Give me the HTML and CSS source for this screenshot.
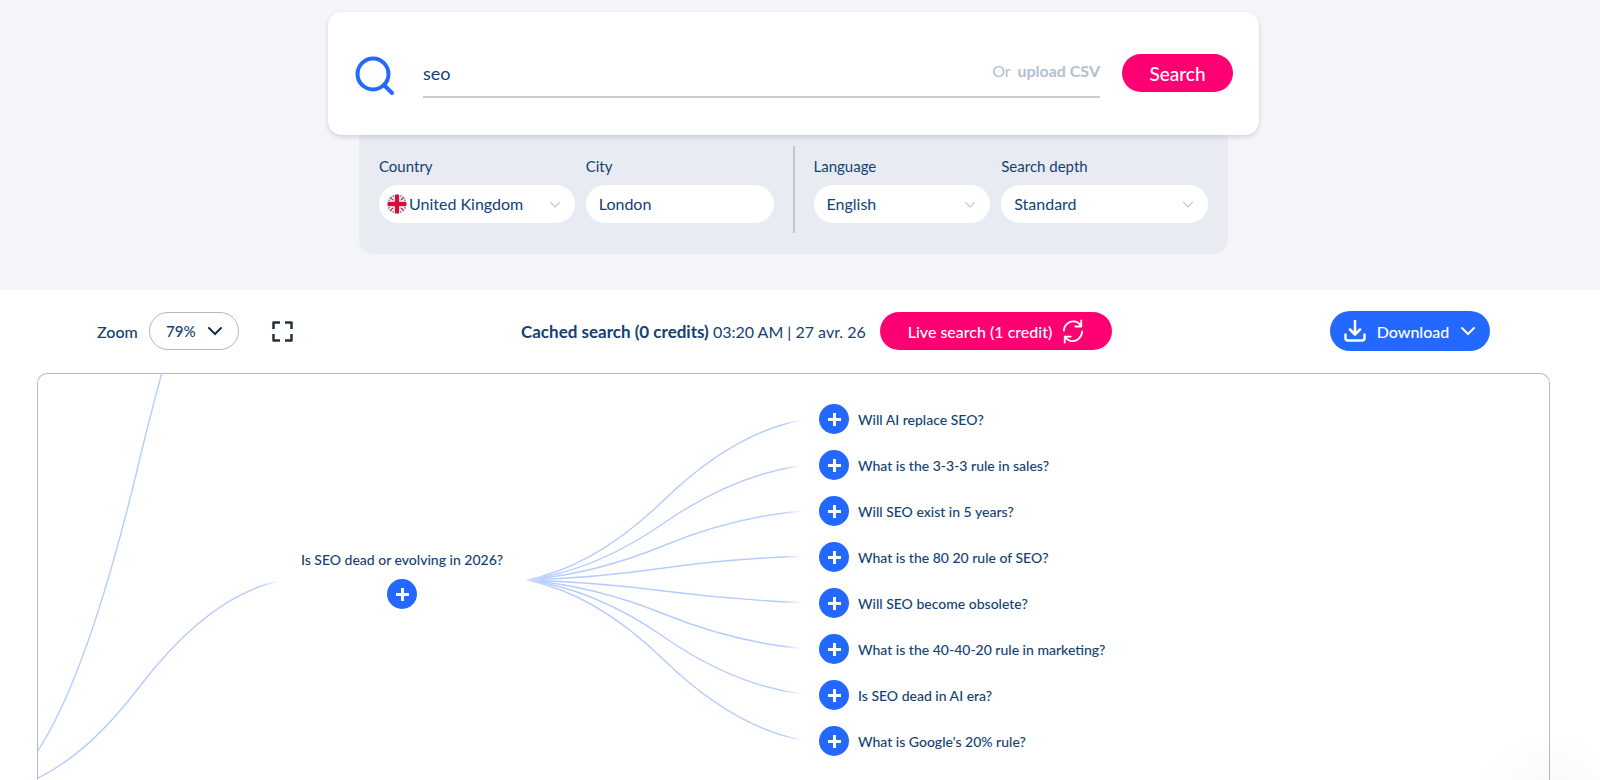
FILE: index.html
```html
<!DOCTYPE html>
<html lang="en">
<head>
<meta charset="utf-8">
<title>Search questions</title>
<link rel="stylesheet" href="styles.css">
</head>
<body>
<header class="hero">
  <form class="search-card">
    <svg class="search-icon" viewBox="0 0 40 40" aria-hidden="true"><circle cx="18" cy="18" r="15.5"/><path d="M29 29l8 8"/></svg>
    <div class="search-field">
      <input class="search-input" type="text" value="seo" aria-label="Keyword">
      <span class="upload">Or <a class="upload-link" href="#">upload CSV</a></span>
    </div>
    <button class="btn btn-search" type="submit">Search</button>
  </form>
  <div class="filters">
    <div class="field field-country">
      <label for="country">Country</label>
      <div class="control">
        <svg class="flag" viewBox="0 0 20 20" aria-hidden="true">
          <clipPath id="round"><circle cx="10" cy="10" r="9.5"/></clipPath>
          <g clip-path="url(#round)"><path fill="#0d3f78" d="M0 0h20v20H0z"/><path d="M0 0l20 20M20 0L0 20" stroke="#fff" stroke-width="4.6"/><path d="M0 0l20 20M20 0L0 20" stroke="#d0103a" stroke-width="1.3"/><path d="M10 0v20M0 10h20" stroke="#fff" stroke-width="7"/><path d="M10 0v20M0 10h20" stroke="#d0103a" stroke-width="4.4"/></g>
        </svg>
        <select class="pill pill-flag" id="country"><option>United Kingdom</option></select>
        <svg class="chevron" viewBox="0 0 10 6" aria-hidden="true"><path d="M1 1l4 4 4-4"/></svg>
      </div>
    </div>
    <div class="field field-city">
      <label for="city">City</label>
      <div class="control"><input class="pill" id="city" type="text" value="London"></div>
    </div>
    <div class="divider"></div>
    <div class="field field-language">
      <label for="language">Language</label>
      <div class="control">
        <select class="pill" id="language"><option>English</option></select>
        <svg class="chevron" viewBox="0 0 10 6" aria-hidden="true"><path d="M1 1l4 4 4-4"/></svg>
      </div>
    </div>
    <div class="field field-depth">
      <label for="depth">Search depth</label>
      <div class="control">
        <select class="pill" id="depth"><option>Standard</option></select>
        <svg class="chevron" viewBox="0 0 10 6" aria-hidden="true"><path d="M1 1l4 4 4-4"/></svg>
      </div>
    </div>
  </div>
</header>
<main class="results">
  <div class="toolbar">
    <div class="zoom">
      <label for="zoom">Zoom</label>
      <div class="control">
        <select class="zoom-select" id="zoom"><option>79%</option></select>
        <svg class="zoom-chevron" viewBox="0 0 14 9" aria-hidden="true"><path d="M1 1l6 6 6-6"/></svg>
      </div>
      <button class="fullscreen" type="button" aria-label="Full screen">
        <svg viewBox="0 0 21 21" aria-hidden="true"><path d="M1.5 8V1.5H8M13 1.5h6.5V8M19.500 13v6.500H13M8 19.500H1.500V13"/></svg>
      </button>
    </div>
    <div class="cached">
      <p><strong>Cached search (0 credits)</strong> 03:20 AM | 27 avr. 26</p>
      <button class="btn btn-live" type="button">Live search (1 credit)
        <svg viewBox="0 0 24 26" aria-hidden="true"><path d="M2 12C2.500 5 8 2 12.500 2c3.500 0 6.500 2 8 5M21 1v6.500h-6.500M22 13c-.5 7-6 10.500-10.500 10.500-3.500 0-6.500-2-8-5M3 25v-6.500h6.500"/></svg>
      </button>
    </div>
    <button class="btn btn-download" type="button">
      <svg class="tray" viewBox="0 0 22 22" aria-hidden="true"><path d="M11 1v13M6 9.500l5 5 5-5M1.500 14.500v3.500q0 2.500 2.500 2.500h14q2.500 0 2.500-2.500v-3.500"/></svg>
      Download
      <svg class="down" viewBox="0 0 16 10" aria-hidden="true"><path d="M2 2l6 6 6-6"/></svg>
    </button>
  </div>
  <section class="canvas">
    <svg class="links" viewBox="38 374 800 406" width="800" height="406" aria-hidden="true">
      <defs>
        <linearGradient id="fan" gradientUnits="userSpaceOnUse" x1="526" y1="0" x2="802" y2="0">
          <stop offset="0" stop-color="#b5ccff" stop-opacity="0"/><stop offset=".07" stop-color="#b5ccff"/><stop offset=".93" stop-color="#b5ccff"/><stop offset="1" stop-color="#b5ccff" stop-opacity="0"/>
        </linearGradient>
        <linearGradient id="root" gradientUnits="userSpaceOnUse" x1="3" y1="0" x2="279" y2="0">
          <stop offset=".93" stop-color="#b5ccff"/><stop offset="1" stop-color="#b5ccff" stop-opacity="0"/>
        </linearGradient>
      </defs>
      <g stroke="url(#root)">
        <path d="M3 788Q72 745 140 458Q209 171 277 128"/>
        <path d="M3 790Q72 776 140 686Q209 596 279 581"/>
      </g>
      <g stroke="url(#fan)">
        <path d="M526 580Q595 567 664 500Q733 433 802 420"/>
        <path d="M526 580Q595 571 664 523Q733 475 802 465.500"/>
        <path d="M526 580Q595 574 664 545.500Q733 517 802 511"/>
        <path d="M526 580Q595 578 664 568Q733 558 802 556.500"/>
        <path d="M526 580Q595 582 664 591Q733 600 802 602.500"/>
        <path d="M526 580Q595 586 664 614Q733 642 802 648.500"/>
        <path d="M526 580Q595 589 664 637Q733 685 802 694"/>
        <path d="M526 580Q595 593 664 660Q733 727 802 740"/>
      </g>
    </svg>
    <div class="parent">
      <span>Is SEO dead or evolving in 2026?</span>
      <button class="plus" type="button" aria-label="Expand"></button>
    </div>
    <ul class="children">
      <li><button class="plus" type="button" aria-label="Expand"></button>Will AI replace SEO?</li>
      <li><button class="plus" type="button" aria-label="Expand"></button>What is the 3-3-3 rule in sales?</li>
      <li><button class="plus" type="button" aria-label="Expand"></button>Will SEO exist in 5 years?</li>
      <li><button class="plus" type="button" aria-label="Expand"></button>What is the 80 20 rule of SEO?</li>
      <li><button class="plus" type="button" aria-label="Expand"></button>Will SEO become obsolete?</li>
      <li><button class="plus" type="button" aria-label="Expand"></button>What is the 40-40-20 rule in marketing?</li>
      <li><button class="plus" type="button" aria-label="Expand"></button>Is SEO dead in AI era?</li>
      <li><button class="plus" type="button" aria-label="Expand"></button>What is Google's 20% rule?</li>
    </ul>
  </section>
</main>
</body>
</html>
```
FILE: styles.css
```css
* { box-sizing: border-box; }

body {
  margin: 0;
  height: 100vh;
  display: flex;
  flex-direction: column;
  overflow: hidden;
  background: #fff;
  color: #124272;
  font-family: Lato, "Open Sans", sans-serif;
  font-size: 16px;
}

button, input, select {
  font: inherit;
  color: inherit;
  border: 0;
  margin: 0;
}

select { appearance: none; }
svg { fill: none; }

.hero {
  background: #f4f5f8;
  padding: 12px 13px 36px 0;
  display: flex;
  flex-direction: column;
  align-items: center;
}

.search-card {
  position: relative;
  z-index: 1;
  width: 100%;
  max-width: 931px;
  background: #fff;
  border-radius: 14px;
  box-shadow: 0 2px 4px rgba(60, 75, 110, .2);
  padding: 42px 26px 37px 27px;
  display: flex;
  align-items: flex-start;
}

.search-icon {
  width: 40px;
  height: 40px;
  margin-right: 28px;
  flex: none;
  align-self: center;
  stroke: #2469ff;
  stroke-width: 4;
  stroke-linecap: round;
}

.search-field {
  flex: 1;
  height: 44px;
  margin-right: 22px;
  display: flex;
  border-bottom: 2px solid #ccc;
}

.search-input {
  flex: 1;
  min-width: 0;
  padding: 0 0 4px;
  background: none;
  font-size: 18px;
}

.upload {
  color: #b0c0d2;
  padding-top: 7px;
}

.upload-link {
  color: inherit;
  font-weight: 700;
  text-decoration: none;
  margin-left: 3px;
}

.btn {
  border-radius: 20px;
  color: #fff;
  font-weight: 500;
  display: flex;
  align-items: center;
  justify-content: center;
}

.btn-search {
  width: 111px;
  height: 38px;
  background: #ff0073;
  font-size: 19px;
}

.filters {
  width: 100%;
  max-width: 869px;
  background: #e8ebf2;
  border-radius: 0 0 14px 14px;
  padding: 11px 20px 21px;
  display: flex;
  gap: 11px;
}

.field {
  display: flex;
  flex-direction: column;
  gap: 9px;
  padding-top: 10px;
  font-size: 15px;
  line-height: 20px;
}

.field-country { flex: 196 1 0; }
.field-city { flex: 188 1 0; }
.field-language { flex: 177 1 0; }
.field-depth { flex: 207 1 0; }

.divider {
  width: 2px;
  height: 87px;
  margin: 0 8px;
  background: #c6c7cb;
}

.control { position: relative; }

.pill {
  display: block;
  width: 100%;
  height: 38px;
  padding: 0 13px 1px;
  border-radius: 19px;
  background: #fff;
  font-size: 16px;
}

.pill-flag { padding-left: 30px; }

.flag {
  position: absolute;
  left: 8px;
  top: 9px;
  width: 20px;
  height: 20px;
}

.chevron {
  position: absolute;
  right: 14px;
  top: 16px;
  width: 12px;
  height: 7px;
  stroke: #bfc3ca;
  pointer-events: none;
}

.results {
  flex: 1;
  min-height: 0;
  padding: 21px 50px 0 37px;
  display: flex;
  flex-direction: column;
}

.toolbar {
  padding: 0 60px;
  display: flex;
  align-items: center;
  justify-content: space-between;
  margin-bottom: 22px;
}

.zoom {
  flex: 1;
  display: flex;
  align-items: center;
  font-weight: 500;
}

.zoom label { width: 52px; }

.zoom-select {
  display: block;
  width: 90px;
  height: 38px;
  border: 1px solid #b5b7bd;
  border-radius: 19px;
  padding: 0 16px;
  background: #fff;
  font-size: 15px;
}

.zoom-chevron {
  position: absolute;
  right: 17px;
  top: 15px;
  width: 14px;
  height: 9px;
  stroke: #1b2f44;
  stroke-width: 2;
  stroke-linecap: round;
  pointer-events: none;
}

.fullscreen {
  width: 21px;
  height: 21px;
  margin-left: 33px;
  padding: 0;
  background: none;
}

.fullscreen svg {
  display: block;
  stroke: #25313e;
  stroke-width: 2.5;
  stroke-linejoin: round;
}

.cached {
  display: flex;
  align-items: center;
  gap: 11px;
}

.cached p { margin: 0; width: 348px; white-space: nowrap; }
.cached strong { font-size: 17px; }

.btn-live {
  width: 232px;
  height: 38px;
  background: #ff0073;
  gap: 10px;
  padding: 0;
}

.btn-live svg {
  width: 22px;
  height: 25px;
  stroke: #fff;
  stroke-width: 2;
  stroke-linejoin: round;
  stroke-linecap: round;
}

.btn-download {
  width: 160px;
  height: 40px;
  margin-left: 218px;
  padding: 0;
  background: #2469ff;
  gap: 11px;
}

.btn-download svg {
  stroke: #fff;
  stroke-width: 2;
  stroke-linecap: round;
  stroke-linejoin: round;
}

.btn-download .tray { width: 22px; height: 22px; stroke-width: 2.5; }
.btn-download .down { width: 16px; height: 10px; }

.canvas {
  flex: 1;
  position: relative;
  overflow: hidden;
  border: 1px solid #b9babd;
  border-bottom: 0;
  border-radius: 10px 10px 0 0;
  font-size: 14px;
  font-weight: 500;
}

.links {
  position: absolute;
  left: 0;
  top: 0;
  stroke-width: 1.4;
}

.parent {
  position: absolute;
  left: 254px;
  top: 176px;
  width: 220px;
  display: flex;
  flex-direction: column;
  align-items: center;
  gap: 9px;
  line-height: 20px;
}

.children {
  position: absolute;
  left: 781px;
  top: 30px;
  margin: 0;
  padding: 0;
  list-style: none;
  display: grid;
  gap: 16px;
}

.children li {
  display: flex;
  align-items: center;
  gap: 9px;
}

.plus {
  width: 30px;
  height: 30px;
  padding: 0;
  border-radius: 50%;
  background:
    linear-gradient(#fff, #fff) center / 13px 3px no-repeat,
    linear-gradient(#fff, #fff) center / 3px 13px no-repeat,
    #2469ff;
}

body::after {
  content: "";
  position: fixed;
  right: 0;
  bottom: 0;
  width: 130px;
  height: 50px;
  background: radial-gradient(circle at 80px 80px, rgba(0, 0, 0, .03), transparent 80px);
  pointer-events: none;
}
```
